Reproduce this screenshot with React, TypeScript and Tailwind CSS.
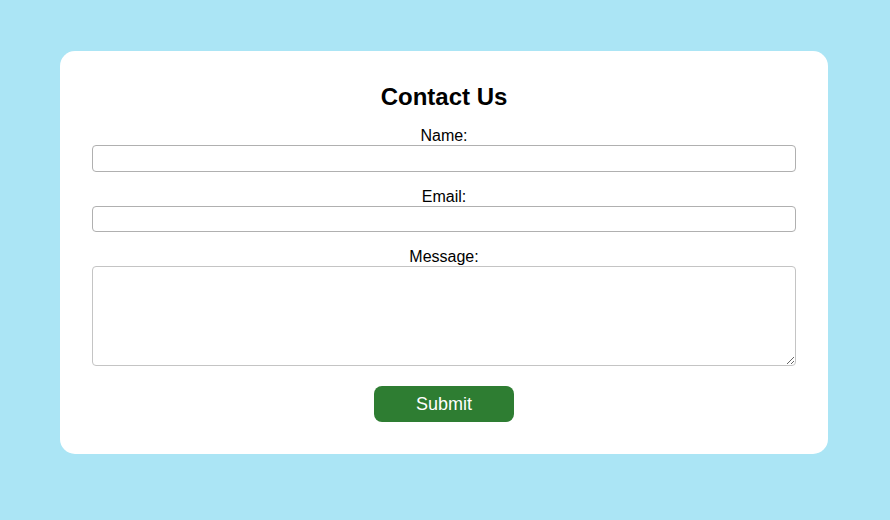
export default function App() {
  return (
    <div className="min-h-screen w-full bg-[#abe5f5] pt-[51px] px-[60px] font-['Liberation_Sans',Arial,sans-serif]">
      <div className="w-[768px] rounded-[15px] bg-white p-8">
        <h2 className="text-center text-[24px] leading-[28px] font-bold text-black mb-4">Contact Us</h2>
        <form className="flex flex-col" onSubmit={(e) => e.preventDefault()}>
          <label className="block text-center text-[16px] leading-[18px] text-black">Name:</label>
          <input type="text" className="h-[27px] w-full rounded-[4px] border border-[#b0b0b0] bg-white px-1 text-[14px] outline-none" />
          <label className="mt-4 block text-center text-[16px] leading-[18px] text-black">Email:</label>
          <input type="email" className="h-[26px] w-full rounded-[4px] border border-[#b0b0b0] bg-white px-1 text-[14px] outline-none" />
          <label className="mt-4 block text-center text-[16px] leading-[18px] text-black">Message:</label>
          <textarea className="h-[100px] w-full rounded-[4px] border border-[#c4c4c4] bg-white p-1 text-[14px] outline-none resize-y" />
          <div className="mt-5 flex justify-center">
            <button type="submit" className="h-9 w-[140px] rounded-[8px] bg-[#2e7d32] text-[18px] text-white">Submit</button>
          </div>
        </form>
      </div>
    </div>
  );
}
